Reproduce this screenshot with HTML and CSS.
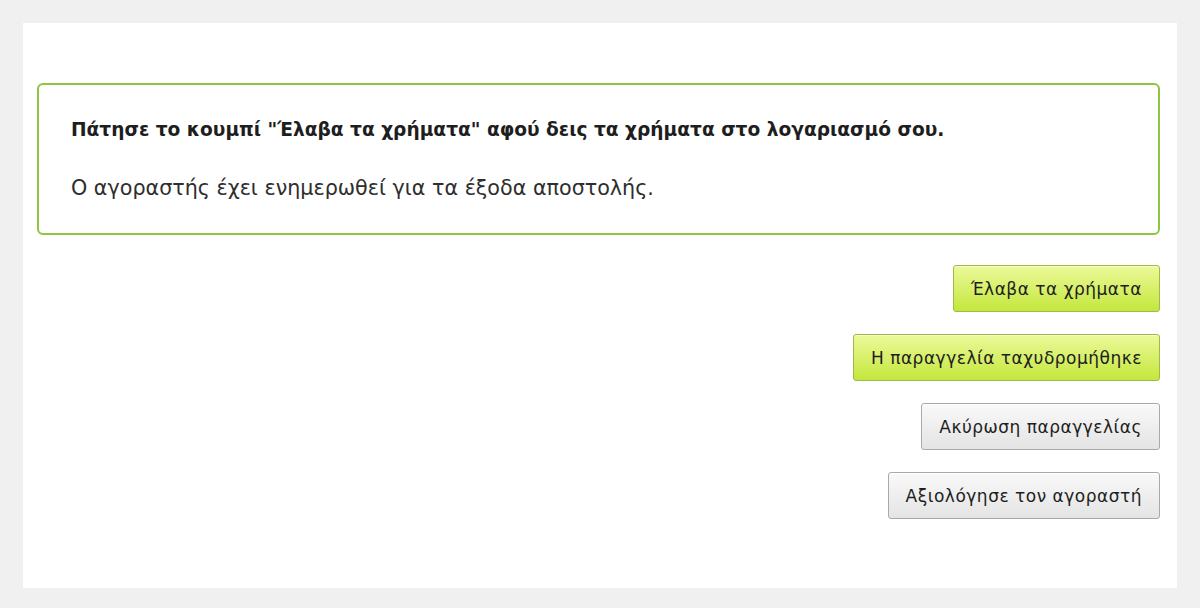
FILE: index.html
```html
<!DOCTYPE html>
<html lang="el">
<head>
<meta charset="utf-8">
<link rel="stylesheet" href="styles.css">
</head>
<body>
<div class="panel">
  <div class="notice">
    <p class="notice-title">Πάτησε το κουμπί "Έλαβα τα χρήματα" αφού δεις τα χρήματα στο λογαριασμό σου.</p>
    <p class="notice-text">Ο αγοραστής έχει ενημερωθεί για τα έξοδα αποστολής.</p>
  </div>
  <div class="actions">
    <button class="btn btn-green">Έλαβα τα χρήματα</button>
    <button class="btn btn-green">Η παραγγελία ταχυδρομήθηκε</button>
    <button class="btn btn-gray">Ακύρωση παραγγελίας</button>
    <button class="btn btn-gray">Αξιολόγησε τον αγοραστή</button>
  </div>
</div>
</body>
</html>
```
FILE: styles.css
```css
html, body {
  margin: 0;
  padding: 0;
  background: #f0f0f0;
}
body {
  padding: 23px;
  height: 608px;
  box-sizing: border-box;
}
.panel {
  background: #ffffff;
  height: 565px;
  box-sizing: border-box;
  padding: 60px 17px 0 14px;
}
.notice {
  border: 2px solid #8cc63f;
  border-radius: 6px;
  height: 152px;
  box-sizing: border-box;
  padding: 0 32px;
  display: flex;
  flex-direction: column;
  justify-content: center;
  gap: 34px;
  font-family: "DejaVu Sans", sans-serif;
  color: #1e1e1e;
}
.notice p { margin: 0; }
.notice-title {
  font-weight: 700;
  font-size: 18.6px;
  line-height: 24px;
}
.notice-text {
  font-size: 20.7px;
  line-height: 24px;
  color: #2e2e2e;
}
.actions {
  display: flex;
  flex-direction: column;
  align-items: flex-end;
  gap: 22px;
  margin-top: 30px;
}
.btn {
  height: 47px;
  padding: 0 17px;
  font-family: "DejaVu Sans", Verdana, sans-serif;
  font-size: 17px;
  letter-spacing: 0.5px;
  color: #1e1e1e;
  border-radius: 3px;
  cursor: pointer;
}
.btn-green {
  border: 1px solid #9dbb4a;
  background: linear-gradient(#ecf99a, #c4e73c);
  box-shadow: inset 0 1px 0 rgba(255,255,255,0.5);
}
.btn-gray {
  border: 1px solid #a9a9a9;
  background: linear-gradient(#f9f9f9, #e4e4e4);
  box-shadow: inset 0 1px 0 #ffffff;
}
```
